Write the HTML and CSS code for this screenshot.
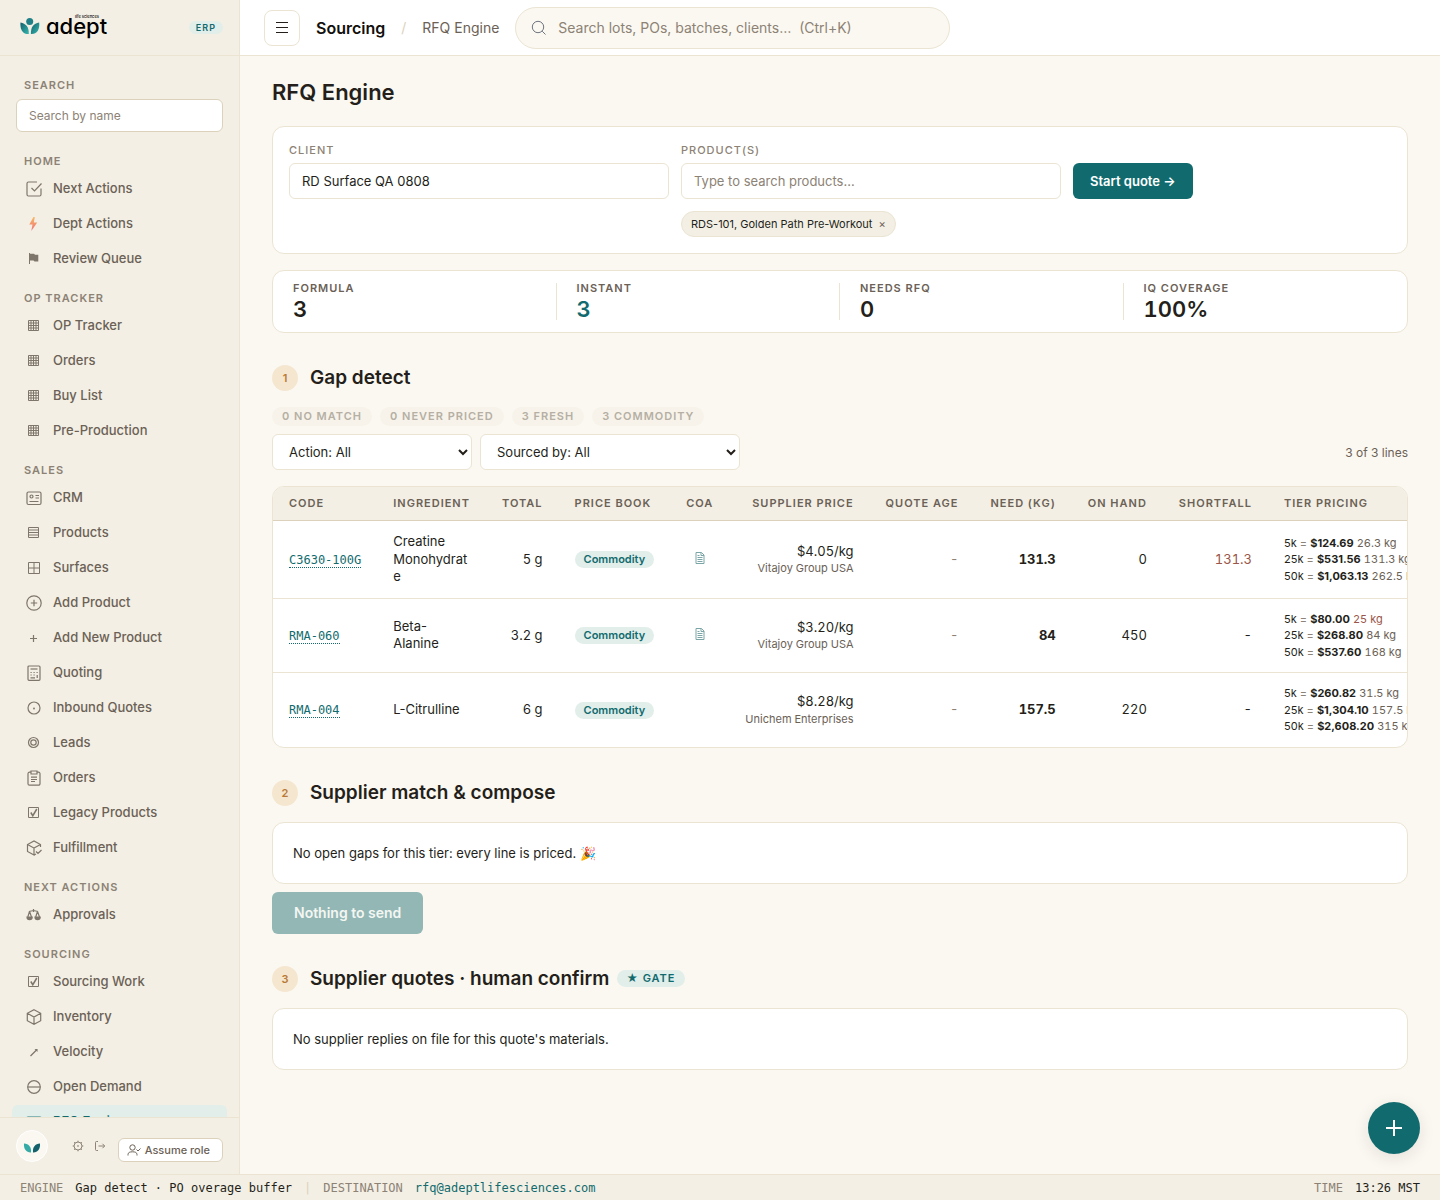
FILE: index.html
```html
<!DOCTYPE html>
<html lang="en">
<head>
  <meta charset="UTF-8" />
  <meta name="viewport" content="width=device-width, initial-scale=1.0"/>
  <title>RFQ Engine - Adept ERP</title>
  <link rel="stylesheet" href="styles.css">
</head>
<body>

<!-- Shared icons -->
<svg class="sprite" aria-hidden="true">
  <defs>
    <linearGradient id="leaf" x1="0" y1="0" x2="1" y2="1">
      <stop offset="0" stop-color="#135f6b"/>
      <stop offset="1" stop-color="#35b8b0"/>
    </linearGradient>
    <linearGradient id="bolt" x1="0" y1="0" x2="0" y2="1">
      <stop offset="0" stop-color="#f8b04a"/>
      <stop offset="1" stop-color="#f2596a"/>
    </linearGradient>
    <symbol id="i-grid" viewBox="0 0 16 16"><path d="M2.500 2.500h10v10h-10zM5 2.500v10M7.500 2.500v10M10 2.500v10M2.500 5h10M2.500 7.500h10M2.500 10h10"/></symbol>
    <symbol id="i-rows" viewBox="0 0 16 16"><path d="M2.500 2.500h10v10h-10zM2.500 5h10M2.500 7.500h10M2.500 10h10"/></symbol>
    <symbol id="i-check" viewBox="0 0 16 16"><path d="M2.500 2.500h10v10h-10z"/><path d="M4.800 7.500l2 3.200L10.800 4" stroke-width="1.500"/></symbol>
    <symbol id="i-doc" viewBox="0 0 10 12"><path d="M1 .5h5.500L9 3v8.500H1zM6 .5V3.500h3M2.500 3.500h2M2.500 5.500h5M2.500 7.500h5M2.500 9.500h5"/></symbol>
  </defs>
</svg>

<div class="app">
  <!-- Sidebar -->
  <aside class="sidebar">
    <div class="brand">
      <a href="#" class="logo">
        <svg class="logo-mark" viewBox="0 0 20 17">
          <circle cx="9.700" cy="3.500" r="3.500" fill="#1f8087"/>
          <path d="M.5 4.500C6 5.500 9 9 8.800 16 3.500 16.500-.3 12 .5 4.500z" fill="url(#leaf)"/>
          <path d="M19.200 4.500C13.500 5.500 10.700 9 10.900 16 16.500 16.500 20 12 19.200 4.500z" fill="url(#leaf)"/>
        </svg>
        <span class="logo-text">adept<small>life sciences</small></span>
      </a>
      <span class="erp-tag">ERP</span>
    </div>

    <nav class="side-nav">
      <label class="nav-label" for="nav-search">Search</label>
      <input class="nav-search" id="nav-search" type="text" placeholder="Search by name">

      <h2 class="nav-label">Home</h2>
      <a href="#"><svg class="icon" viewBox="0 0 16 16"><path d="M15 7.500V13.500a1.500 1.500 0 0 1-1.500 1.500h-11A1.500 1.500 0 0 1 1 13.500v-11A1.500 1.500 0 0 1 2.500 1H11M5.500 7l3 3L15.500 2.500"/></svg>Next Actions</a>
      <a href="#"><svg class="icon bolt" viewBox="0 0 16 16"><path d="M7.500 1L3.300 8.500h3.200L5.300 15l5.900-8.500H7.800L8.800 1z"/></svg>Dept Actions</a>
      <a href="#"><svg class="icon solid" viewBox="0 0 16 16"><path d="M3 2h1v.8h4l1 1h3.300v6.700H8.500l-1-1H4V13H3z"/></svg>Review Queue</a>

      <h2 class="nav-label">OP Tracker</h2>
      <a href="#"><svg class="icon fine"><use href="#i-grid"/></svg>OP Tracker</a>
      <a href="#"><svg class="icon fine"><use href="#i-grid"/></svg>Orders</a>
      <a href="#"><svg class="icon fine"><use href="#i-grid"/></svg>Buy List</a>
      <a href="#"><svg class="icon fine"><use href="#i-grid"/></svg>Pre-Production</a>

      <h2 class="nav-label">Sales</h2>
      <a href="#"><svg class="icon" viewBox="0 0 16 16"><rect x="1" y="2" width="14" height="12.500" rx="1.500"/><circle cx="5.500" cy="6.500" r="1.500"/><path d="M9.500 5.500H13M9.500 8H13M3.500 11.500h9"/></svg>CRM</a>
      <a href="#"><svg class="icon fine"><use href="#i-rows"/></svg>Products</a>
      <a href="#"><svg class="icon fine" viewBox="0 0 16 16"><path d="M2.500 2.500h11v11h-11zM8 2.500v11M2.500 8h11"/></svg>Surfaces</a>
      <a href="#"><svg class="icon" viewBox="0 0 16 16"><circle cx="8" cy="8" r="7.200"/><path d="M8 4.800v6.400M4.800 8h6.400"/></svg>Add Product</a>
      <a href="#"><svg class="icon" viewBox="0 0 16 16"><path d="M7.500 5v7M4 8.500h7"/></svg>Add New Product</a>
      <a href="#"><svg class="icon" viewBox="0 0 16 16"><rect x="2" y="1" width="12" height="14.300" rx="1"/><path d="M4.500 4h7"/><path d="M4.500 7.500h1.200M7.500 7.500h1.200M10.500 7.500h1.200M4.500 10h1.200M7.500 10h1.200M11.200 10v3M4.500 12.800h4.500"/></svg>Quoting</a>
      <a href="#"><svg class="icon" viewBox="0 0 16 16"><circle cx="8" cy="8" r="6"/><circle cx="8" cy="8.500" r=".4"/></svg>Inbound Quotes</a>
      <a href="#"><svg class="icon" viewBox="0 0 16 16"><circle cx="7.500" cy="7.500" r="5"/><circle cx="7.500" cy="7.500" r="2.700"/></svg>Leads</a>
      <a href="#"><svg class="icon" viewBox="0 0 16 16"><path d="M5 2.200H3.500A1.500 1.500 0 0 0 2 3.700v10a1.500 1.500 0 0 0 1.500 1.500h9a1.500 1.500 0 0 0 1.500-1.500v-10a1.500 1.500 0 0 0-1.500-1.500H11M5 1h6v3H5zM5 7.200h6M5 9.500h6M5 11.500h4"/></svg>Orders</a>
      <a href="#"><svg class="icon fine"><use href="#i-check"/></svg>Legacy Products</a>
      <a href="#"><svg class="icon" viewBox="0 0 16 16"><path d="M14.500 7V4.500L8 1 1.500 4.500V11.500L8 15V8L1.500 4.500M8 8l6.500-3.500M8 15l2-1M10 11.500l2 2 3.500-3.500"/></svg>Fulfillment</a>

      <h2 class="nav-label">Next Actions</h2>
      <a href="#"><svg class="icon" viewBox="0 0 16 16"><path d="M7.500 2v3M3 4.500l4.500-1L12 4.500M3.500 4.500L1.800 10M3.500 4.500L5.500 10M11.500 4.500L9.700 10M11.500 4.500L13.500 10"/><path d="M1 10h5.200c0 3.500-5.200 3.500-5.200 0zM9 10h5.200c0 3.500-5.200 3.500-5.200 0z" fill="currentColor"/></svg>Approvals</a>

      <h2 class="nav-label">Sourcing</h2>
      <a href="#"><svg class="icon fine"><use href="#i-check"/></svg>Sourcing Work</a>
      <a href="#"><svg class="icon" viewBox="0 0 16 16"><path d="M8 .8l6.700 3.500v7.400L8 15.200l-6.700-3.500V4.300zM1.300 4.300L8 8l6.700-3.700M8 8v7.200"/></svg>Inventory</a>
      <a href="#"><svg class="icon" viewBox="0 0 16 16"><path d="M4.500 12L11 5.500"/><path d="M8.500 5H11.500V8z" fill="currentColor" stroke="none"/></svg>Velocity</a>
      <a href="#"><svg class="icon" viewBox="0 0 16 16"><circle cx="8" cy="8" r="6.300"/><path d="M1.700 8h12.600"/></svg>Open Demand</a>
      <a href="#" class="active"><svg class="icon" viewBox="0 0 16 16"><rect x="1" y="3" width="14" height="10" rx="1"/><path d="M1 4l7 5 7-5"/></svg>RFQ Engine</a>
    </nav>

    <div class="side-foot">
      <span class="avatar">
        <svg viewBox="0 0 18 10">
          <path d="M1 .5C6 1 8.500 4 8 9.500 3.500 9.800.5 6 1 .5z" fill="#35aaa6"/>
          <path d="M17 .5C12 1 9.500 4 10 9.500 14.500 9.800 17.500 6 17 .5z" fill="#14606b"/>
        </svg>
      </span>
      <div class="foot-icons">
        <button type="button" aria-label="Settings"><svg viewBox="0 0 12 12"><circle cx="6" cy="6" r="4"/><circle cx="6" cy="6" r=".4"/><path d="M6 .7V2M6 10v1.300M.7 6H2M10 6h1.300M2.200 2.200l1 1M8.800 8.800l1 1M9.800 2.200l-1 1M3.200 8.800l-1 1"/></svg></button>
        <button type="button" aria-label="Sign out"><svg viewBox="0 0 12 12"><path d="M4 1.500H2.500a1 1 0 0 0-1 1v7a1 1 0 0 0 1 1H4M4.500 6h6M8.500 3.800L10.700 6 8.500 8.200"/></svg></button>
      </div>
      <button type="button" class="role-btn"><svg viewBox="0 0 14 12"><circle cx="5.500" cy="3.500" r="2.700"/><path d="M1 11.500V10.500C1 8.500 2.800 7.800 5.500 7.800s4.500.7 4.500 2.700v1M9.500 5.500L11 7l2.500-2.500"/></svg>Assume role</button>
    </div>
  </aside>

  <div class="page">
    <!-- Top bar -->
    <header class="topbar">
      <button type="button" class="menu-toggle" aria-label="Toggle menu"><svg viewBox="0 0 12 12"><path d="M0 .5h12M0 5.500h12M0 10.500h12"/></svg></button>
      <div class="crumbs">
        <strong>Sourcing</strong>
        <span class="slash">/</span>
        <span>RFQ Engine</span>
      </div>
      <div class="global-search">
        <svg viewBox="0 0 16 16"><circle cx="7" cy="7" r="5.700"/><path d="M11.200 11.200l3.300 3.300"/></svg>
        <input type="text" aria-label="Search everything" placeholder="Search lots, POs, batches, clients…  (Ctrl+K)">
      </div>
    </header>

    <main class="content">
      <h1>RFQ Engine</h1>

      <form class="card quote-form">
        <div class="field">
          <label for="client">Client</label>
          <input id="client" type="text" value="RD Surface QA 0808">
        </div>
        <div class="field">
          <label for="products">Product(s)</label>
          <input id="products" type="text" placeholder="Type to search products…">
          <span class="product-chip">RDS-101, Golden Path Pre-Workout <button type="button" aria-label="Remove product">×</button></span>
        </div>
        <button type="button" class="btn start-btn">Start quote →</button>
      </form>

      <div class="card stats">
        <div class="stat"><span>Formula</span><b>3</b></div>
        <div class="stat"><span>Instant</span><b class="teal">3</b></div>
        <div class="stat"><span>Needs RFQ</span><b>0</b></div>
        <div class="stat"><span>IQ Coverage</span><b>100%</b></div>
      </div>

      <!-- Step 1 -->
      <div class="step-head"><span class="step-num">1</span><h2>Gap detect</h2></div>
      <div class="gap-chips">
        <span>0 No match</span>
        <span>0 Never priced</span>
        <span>3 Fresh</span>
        <span>3 Commodity</span>
      </div>
      <div class="filters">
        <select class="action-select" aria-label="Action"><option>Action: All</option></select>
        <select class="source-select" aria-label="Sourced by"><option>Sourced by: All</option></select>
        <span class="line-count">3 of 3 lines</span>
      </div>

      <div class="card table-wrap">
        <table>
          <thead>
            <tr>
              <th>Code</th>
              <th>Ingredient</th>
              <th class="num">Total</th>
              <th>Price book</th>
              <th>COA</th>
              <th class="num">Supplier price</th>
              <th class="num">Quote age</th>
              <th class="num">Need (kg)</th>
              <th class="num">On hand</th>
              <th class="num">Shortfall</th>
              <th>Tier pricing</th>
            </tr>
          </thead>
          <tbody>
            <tr>
              <td><a href="#" class="code">C3630-100G</a></td>
              <td class="name">Creatine Monohydrate</td>
              <td class="num">5 g</td>
              <td><span class="badge">Commodity</span></td>
              <td class="coa"><a href="#" aria-label="View COA"><svg><use href="#i-doc"/></svg></a></td>
              <td class="num">$4.05/kg<small>Vitajoy Group USA</small></td>
              <td class="num muted">-</td>
              <td class="num strong">131.3</td>
              <td class="num">0</td>
              <td class="num short">131.3</td>
              <td class="tiers">
                <div>5k <i>=</i> <b>$124.69</b> <span>26.3 kg</span></div>
                <div>25k <i>=</i> <b>$531.56</b> <span>131.3 kg</span></div>
                <div>50k <i>=</i> <b>$1,063.13</b> <span>262.5 kg</span></div>
              </td>
            </tr>
            <tr>
              <td><a href="#" class="code">RMA-060</a></td>
              <td class="name">Beta-Alanine</td>
              <td class="num">3.2 g</td>
              <td><span class="badge">Commodity</span></td>
              <td class="coa"><a href="#" aria-label="View COA"><svg><use href="#i-doc"/></svg></a></td>
              <td class="num">$3.20/kg<small>Vitajoy Group USA</small></td>
              <td class="num muted">-</td>
              <td class="num strong">84</td>
              <td class="num">450</td>
              <td class="num">-</td>
              <td class="tiers">
                <div>5k <i>=</i> <b>$80.00</b> <span class="short">25 kg</span></div>
                <div>25k <i>=</i> <b>$268.80</b> <span>84 kg</span></div>
                <div>50k <i>=</i> <b>$537.60</b> <span>168 kg</span></div>
              </td>
            </tr>
            <tr>
              <td><a href="#" class="code">RMA-004</a></td>
              <td class="name">L-Citrulline</td>
              <td class="num">6 g</td>
              <td><span class="badge">Commodity</span></td>
              <td class="coa"></td>
              <td class="num">$8.28/kg<small>Unichem Enterprises</small></td>
              <td class="num muted">-</td>
              <td class="num strong">157.5</td>
              <td class="num">220</td>
              <td class="num">-</td>
              <td class="tiers">
                <div>5k <i>=</i> <b>$260.82</b> <span>31.5 kg</span></div>
                <div>25k <i>=</i> <b>$1,304.10</b> <span>157.5 kg</span></div>
                <div>50k <i>=</i> <b>$2,608.20</b> <span>315 kg</span></div>
              </td>
            </tr>
          </tbody>
        </table>
      </div>

      <!-- Step 2 -->
      <div class="step-head"><span class="step-num">2</span><h2>Supplier match &amp; compose</h2></div>
      <div class="card note">No open gaps for this tier: every line is priced. 🎉</div>
      <button type="button" class="btn send-btn" disabled>Nothing to send</button>

      <!-- Step 3 -->
      <div class="step-head"><span class="step-num">3</span><h2>Supplier quotes · human confirm</h2><span class="gate">★ Gate</span></div>
      <div class="card note">No supplier replies on file for this quote's materials.</div>
    </main>
  </div>
</div>

<footer class="statusbar">
  <span class="key">ENGINE</span>
  <span>Gap detect · PO overage buffer</span>
  <span class="bar">|</span>
  <span class="key">DESTINATION</span>
  <a href="#">rfq@adeptlifesciences.com</a>
  <span class="key time">TIME</span>
  <span>13:26 MST</span>
</footer>

<button type="button" class="fab" aria-label="Create"><svg viewBox="0 0 16 16"><path d="M8 0v16M0 8h16"/></svg></button>

</body>
</html>
```
FILE: styles.css
```css
* {
  margin: 0;
  padding: 0;
  box-sizing: border-box;
}

:root {
  --sand: #f3efe4;
  --cream: #fbf8f1;
  --line: #ebe4d3;
  --line-strong: #dcd2bc;
  --ink: #241f1a;
  --text: #6b6156;
  --muted: #8c8275;
  --teal: #116b6e;
  --teal-light: #e2eeea;
}

body {
  display: flex;
  flex-direction: column;
  height: 100vh;
  font-family: Inter, "Noto Sans", sans-serif;
  font-size: 13px;
  color: var(--ink);
  background-color: var(--cream);
}

button,
input,
select {
  font-family: inherit;
  color: inherit;
}

button {
  cursor: pointer;
}

svg {
  fill: none;
  stroke: currentColor;
  flex-shrink: 0;
}

.sprite {
  position: absolute;
  width: 0;
  height: 0;
}

a {
  text-decoration: none;
  color: inherit;
}

.app {
  flex: 1;
  min-height: 0;
  display: flex;
}

/* Sidebar */
.sidebar {
  width: 240px;
  flex-shrink: 0;
  display: flex;
  flex-direction: column;
  background-color: var(--sand);
  border-right: 1px solid var(--line);
}

.brand {
  display: flex;
  align-items: center;
  justify-content: space-between;
  height: 56px;
  flex-shrink: 0;
  padding: 0 16px 0 20px;
  border-bottom: 1px solid var(--line);
}

.logo {
  display: flex;
  align-items: center;
  gap: 6px;
  padding-bottom: 3px;
  color: #000;
}

.logo-mark {
  width: 20px;
  height: 17px;
  stroke: none;
}

.logo-text {
  position: relative;
  font-size: 22px;
  line-height: 24px;
  font-weight: 500;
  font-feature-settings: "cv11";
}

.logo-text small {
  position: absolute;
  top: 0;
  left: 29px;
  font-size: 4px;
  line-height: 6px;
  white-space: nowrap;
}

.erp-tag {
  padding: 0 7px;
  border-radius: 7px;
  font-size: 9px;
  line-height: 13px;
  font-weight: 600;
  letter-spacing: 1px;
  color: var(--teal);
  background-color: var(--teal-light);
}

.side-nav {
  flex: 1;
  min-height: 0;
  overflow: hidden;
  display: flex;
  flex-direction: column;
  gap: 2px;
  padding: 6px 12px 0;
}

.nav-label {
  flex-shrink: 0;
  margin: 14px 12px 2px;
  font-size: 11px;
  line-height: 14px;
  font-weight: 600;
  letter-spacing: 1px;
  text-transform: uppercase;
  color: var(--muted);
}

.side-nav .nav-label:first-child {
  margin: 16px 12px 5px;
}

.nav-search {
  flex-shrink: 0;
  height: 33px;
  margin: 0 4px 6px;
  padding: 0 12px;
  font-size: 12px;
  background-color: #fff;
  border: 1px solid var(--line-strong);
  border-radius: 6px;
}

input::placeholder {
  color: var(--muted);
  opacity: 1;
}

.side-nav a {
  flex-shrink: 0;
  display: flex;
  align-items: center;
  gap: 11px;
  height: 33px;
  padding: 0 14px 2px;
  border-radius: 6px;
  font-weight: 500;
  color: var(--text);
}

.side-nav a.active {
  color: var(--teal);
  background-color: var(--teal-light);
  font-weight: 600;
}

.icon {
  width: 16px;
  height: 16px;
  margin-top: 2px;
  stroke-width: 1.2;
  opacity: 0.85;
}

.icon.fine {
  stroke-width: 1;
}

.icon.solid {
  fill: currentColor;
  stroke: none;
}

.icon.bolt {
  fill: url(#bolt);
  stroke: none;
}

.side-foot {
  display: flex;
  align-items: center;
  flex-shrink: 0;
  padding: 12px 16px;
  border-top: 1px solid var(--line);
}

.avatar {
  display: flex;
  align-items: center;
  justify-content: center;
  width: 32px;
  height: 32px;
  padding-top: 4px;
  border-radius: 50%;
  background-color: var(--cream);
  border: 1px solid #fff;
}

.avatar svg {
  width: 18px;
  height: 10px;
  stroke: none;
}

.foot-icons {
  display: flex;
  gap: 10px;
  margin-left: 24px;
  color: var(--muted);
}

.foot-icons button {
  display: flex;
  background: none;
  border: none;
}

.foot-icons svg {
  width: 12px;
  height: 12px;
}

.role-btn {
  display: flex;
  align-items: center;
  align-self: flex-end;
  gap: 4px;
  height: 24px;
  margin-left: auto;
  padding: 0 12px 0 8px;
  font-size: 11px;
  font-weight: 500;
  white-space: nowrap;
  color: var(--text);
  background-color: #fff;
  border: 1px solid var(--line-strong);
  border-radius: 6px;
}

.role-btn svg {
  width: 14px;
  height: 12px;
}

/* Top bar */
.page {
  flex: 1;
  min-width: 0;
  display: flex;
  flex-direction: column;
}

.topbar {
  display: flex;
  align-items: center;
  gap: 16px;
  height: 56px;
  flex-shrink: 0;
  padding: 0 24px;
  background-color: #fff;
  border-bottom: 1px solid var(--line);
}

.menu-toggle {
  display: flex;
  align-items: center;
  justify-content: center;
  width: 36px;
  height: 36px;
  background: none;
  border: 1px solid var(--line);
  border-radius: 8px;
}

.menu-toggle svg {
  width: 12px;
  height: 12px;
}

.crumbs {
  display: flex;
  align-items: center;
  gap: 16px;
  font-size: 14px;
  white-space: nowrap;
  color: var(--text);
}

.crumbs strong {
  font-size: 16px;
  font-weight: 600;
  color: #120f0c;
}

.slash {
  color: var(--line-strong);
}

.global-search {
  display: flex;
  align-items: center;
  gap: 11px;
  width: 435px;
  height: 42px;
  padding: 0 16px 0 15px;
  color: #6f7480;
  background-color: var(--cream);
  border: 1px solid var(--line);
  border-radius: 21px;
}

.global-search svg {
  width: 16px;
  height: 16px;
}

.global-search input {
  flex: 1;
  min-width: 0;
  font-size: 14px;
  background: none;
  border: none;
  outline: none;
}

/* Content */
.content {
  flex: 1;
  min-height: 0;
  overflow: hidden;
  padding: 20px 32px;
}

h1 {
  margin-bottom: 18px;
  font-size: 22px;
  line-height: 32px;
  font-weight: 600;
}

.card {
  background-color: #fff;
  border: 1px solid var(--line);
  border-radius: 12px;
}

.quote-form {
  display: grid;
  grid-template-columns: minmax(0, 380px) minmax(0, 380px) auto;
  justify-content: start;
  align-items: start;
  gap: 12px;
  padding: 16px;
}

.field {
  display: flex;
  flex-direction: column;
  align-items: flex-start;
}

.field label {
  margin-bottom: 6px;
  font-size: 11px;
  line-height: 14px;
  font-weight: 500;
  letter-spacing: 1px;
  text-transform: uppercase;
  color: var(--muted);
}

.field input {
  width: 100%;
  height: 36px;
  padding: 0 12px;
  font-size: 13px;
  background-color: #fff;
  border: 1px solid var(--line);
  border-radius: 6px;
}

.product-chip {
  display: flex;
  align-items: center;
  gap: 6px;
  height: 26px;
  margin-top: 12px;
  padding: 0 9px;
  font-size: 11px;
  background-color: var(--sand);
  border: 1px solid var(--line);
  border-radius: 13px;
}

.product-chip button {
  font-size: 11px;
  color: var(--text);
  background: none;
  border: none;
}

.btn {
  font-weight: 600;
  color: #fff;
  background-color: var(--teal);
  border: none;
  border-radius: 6px;
}

.start-btn {
  height: 36px;
  margin-top: 20px;
  padding: 0 17px;
  font-size: 13px;
}

.stats {
  display: grid;
  grid-template-columns: repeat(4, 1fr);
  margin-top: 16px;
  padding: 12px 0;
}

.stat {
  display: flex;
  flex-direction: column;
  padding: 0 20px;
  border-right: 1px solid var(--line);
}

.stat:last-child {
  border-right: none;
}

.stat span {
  font-size: 11px;
  line-height: 11px;
  font-weight: 600;
  letter-spacing: 1px;
  text-transform: uppercase;
  color: var(--text);
}

.stat b {
  margin-top: 4px;
  font-size: 22px;
  line-height: 22px;
  font-weight: 600;
  font-variant-numeric: tabular-nums;
}

.stat b.teal {
  color: var(--teal);
}

.step-head {
  display: flex;
  align-items: center;
  margin: 32px 0 16px;
}

.step-num {
  width: 26px;
  margin-right: 12px;
  border-radius: 50%;
  font-size: 11px;
  line-height: 26px;
  font-weight: 600;
  text-align: center;
  color: #b87a35;
  background-color: #f5e6d0;
}

.step-head h2 {
  font-size: 19px;
  line-height: 26px;
  font-weight: 600;
}

.gate {
  margin-left: 8px;
  padding: 0 9px;
  border-radius: 9px;
  font-size: 11px;
  line-height: 17px;
  font-weight: 600;
  letter-spacing: 1px;
  text-transform: uppercase;
  color: var(--teal);
  background-color: var(--teal-light);
}

.gap-chips {
  display: flex;
  gap: 8px;
}

.gap-chips span {
  padding: 0 10px;
  border-radius: 10px;
  font-size: 11px;
  line-height: 19px;
  font-weight: 600;
  letter-spacing: 1px;
  text-transform: uppercase;
  color: #b5afa4;
  background-color: #f7f3ea;
}

.filters {
  display: flex;
  align-items: center;
  gap: 8px;
  margin: 8px 0 16px;
}

.filters select {
  height: 36px;
  padding: 0 0 0 12px;
  font-size: 13px;
  background-color: #fff;
  border: 1px solid var(--line);
  border-radius: 6px;
}

.action-select {
  width: 200px;
}

.source-select {
  width: 260px;
}

.line-count {
  margin-left: auto;
  font-size: 12px;
  color: var(--text);
}

/* Table */
.table-wrap {
  overflow: hidden;
}

table {
  width: 100%;
  border-collapse: separate;
  border-spacing: 0;
}

th {
  height: 34px;
  padding: 0 16px 2px;
  font-size: 11px;
  font-weight: 600;
  letter-spacing: 1px;
  text-align: left;
  text-transform: uppercase;
  white-space: nowrap;
  color: var(--text);
  background-color: var(--sand);
  border-bottom: 1px solid var(--line-strong);
}

td {
  padding: 12px 16px;
  line-height: 1.35;
  white-space: nowrap;
  border-bottom: 1px solid var(--line);
}

tbody tr:last-child td {
  border-bottom: none;
}

th.num,
td.num {
  text-align: right;
}

td.num {
  font-variant-numeric: tabular-nums;
}

td.name {
  white-space: normal;
  overflow-wrap: anywhere;
}

td.coa {
  text-align: center;
  color: #7ba5a6;
}

td.coa svg {
  width: 10px;
  height: 12px;
}

td small {
  display: block;
  font-size: 11px;
  line-height: 16px;
  color: var(--text);
}

td.strong {
  font-weight: 700;
}

td.muted {
  color: var(--muted);
}

td.short,
.tiers .short {
  color: #9b5548;
}

.code {
  font-family: "DejaVu Sans Mono", monospace;
  font-size: 12px;
  color: var(--teal);
  border-bottom: 1px dotted var(--teal);
}

.badge {
  display: inline-block;
  padding: 0 9px;
  border-radius: 9px;
  font-size: 11px;
  line-height: 17px;
  font-weight: 600;
  color: var(--teal);
  background-color: var(--teal-light);
}

.tiers {
  font-size: 11px;
  line-height: 1.5;
}

.tiers i {
  font-style: normal;
  color: var(--muted);
}

.tiers span {
  color: var(--text);
  font-variant-numeric: tabular-nums;
}

.note {
  padding: 20px;
  line-height: 20px;
}

.send-btn {
  display: block;
  height: 42px;
  margin-top: 8px;
  padding: 0 22px;
  font-size: 14px;
}

.send-btn:disabled {
  color: #f4f6f2;
  background-color: #92b7b5;
}

/* Status bar */
.statusbar {
  display: flex;
  align-items: center;
  gap: 12px;
  height: 26px;
  flex-shrink: 0;
  padding: 0 20px;
  font-family: "DejaVu Sans Mono", monospace;
  font-size: 12px;
  white-space: nowrap;
  background-color: var(--sand);
  border-top: 1px solid var(--line);
}

.statusbar .key {
  color: var(--muted);
}

.statusbar .bar {
  color: var(--line-strong);
}

.statusbar a {
  color: var(--teal);
}

.statusbar .time {
  margin-left: auto;
}

.fab {
  position: fixed;
  right: 20px;
  bottom: 46px;
  display: flex;
  align-items: center;
  justify-content: center;
  width: 52px;
  height: 52px;
  color: #fff;
  background-color: var(--teal);
  border: none;
  border-radius: 50%;
  box-shadow: 0 4px 16px rgba(36, 31, 26, 0.1);
}

.fab svg {
  width: 16px;
  height: 16px;
  stroke-width: 2;
}
```
